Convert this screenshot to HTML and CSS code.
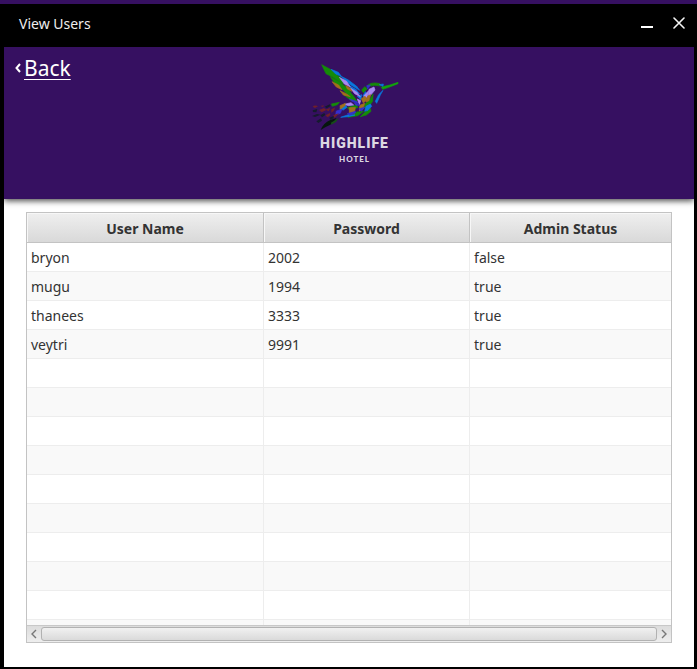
FILE: index.html
```html
<!DOCTYPE html>
<html lang="en">
<head>
<meta charset="utf-8">
<title>View Users</title>
<link rel="stylesheet" href="styles.css">
</head>
<body>
<div class="window">
  <header class="titlebar">
    <h1 class="title">View Users</h1>
    <div class="controls">
      <button class="control" type="button" aria-label="Minimize">
        <svg width="14" height="14" viewBox="0 0 14 14"><path d="M1 10h12" stroke="#fff" stroke-width="2"/></svg>
      </button>
      <button class="control" type="button" aria-label="Close">
        <svg width="14" height="14" viewBox="0 0 14 14"><path d="M2 1l10 10M12 1L2 11" stroke="#f4f4f4" stroke-width="1.6" stroke-linecap="round"/></svg>
      </button>
    </div>
  </header>
  <div class="banner">
    <div class="back">
      <svg width="6" height="10" viewBox="0 0 6 10" aria-hidden="true"><path d="M5 1L1.5 5 5 9" fill="none" stroke="#fff" stroke-width="2"/></svg>
      <a class="back-link" href="#">Back</a>
    </div>
    <div class="logo">
      <svg class="bird" width="110" height="70" viewBox="0 18 330 210" aria-hidden="true">
        <g fill="#148b08" stroke="#148b08">
          <path d="M65 29L91 43 126 72 130 86 96 65 78 56z"/>
          <path d="M91 65L118 80 148 104 156 123 132 105 108 91z"/>
          <path d="M117 91L140 104 159 121 171 139 148 125z"/>
          <path d="M131 119L153 126 169 139 151 135z"/>
          <path d="M203 90Q218 80 240 86L243 93 224 91 205 94z"/>
          <path d="M244 96L270 90 294 82 294 86 266 97 248 103z" fill="#11a50b" stroke="#11a50b"/>
          <path d="M185 105L194 95 202 101 190 113z"/>
          <path d="M194 148L210 133 219 117 218 139 207 154 193 159z"/>
          <path d="M142 158L169 149 174 157 151 167z"/>
          <path d="M144 187L170 171 191 169 173 182z"/>
          <path d="M194 172L211 160 213 169 199 180 181 185z"/>
          <path d="M94 147L118 142 112 149 97 154z"/>
        </g>
        <g fill="#0878dc" stroke="#0878dc">
          <path d="M93 43L115 52 124 64 107 57z"/>
          <path d="M120 62L145 75 170 94 179 106 151 89z"/>
          <path d="M146 91L167 103 179 117 164 110z"/>
          <path d="M226 139L236 119 249 106 241 120 230 145z"/>
          <path d="M119 162L135 148 141 157 130 165z"/>
          <path d="M198 154L211 147 215 154 204 166 194 169z"/>
          <path d="M122 187L145 179 165 180 145 185z"/>
          <path d="M238 89L250 87 249 94z"/>
          <path d="M189 122L196 110 201 116 195 131z"/>
          <path d="M172 124L185 119 183 134z"/>
        </g>
        <g fill="#a98af2" stroke="#a98af2">
          <path d="M118 67L140 79 151 96 133 87z"/>
          <path d="M151 99L171 112 181 125 164 116z"/>
          <path d="M207 103L222 96 225 105 214 118 204 128z"/>
          <path d="M193 121L206 107 202 125 190 139z"/>
          <path d="M133 148L153 143 161 150 145 152z"/>
          <path d="M172 132L182 137 178 149z"/>
        </g>
        <g fill="#a36f1c" stroke="#a36f1c">
          <path d="M96 80L116 90 126 104 109 96z"/>
          <path d="M120 107L140 117 151 125 130 120z"/>
          <path d="M137 91L149 98 156 109 142 102z"/>
          <path d="M184 131L195 124 203 133 190 144z"/>
          <path d="M203 123L212 119 207 137 198 141z"/>
          <path d="M120 152L136 145 135 152 121 163z"/>
          <path d="M148 158L166 157 164 170 148 174z"/>
          <path d="M179 151L194 145 189 162 178 168z"/>
        </g>
        <g fill="#3430cf" stroke="#3430cf">
          <path d="M163 143L180 151 168 151z"/>
          <path d="M142 176L166 169 166 174 149 181z"/>
          <path d="M177 161L194 157 184 169z"/>
          <path d="M200 92L211 90 203 102z"/>
          <path d="M109 168L126 163 121 175 107 180z"/>
          <path d="M148 132L169 139 176 146 156 139z"/>
        </g>
        <g fill="#702029">
          <path d="M38 155Q44 149 54 154L45 159z"/>
          <path d="M61 153L72 151 69 156z"/>
          <path d="M57 165L72 159 79 165 65 172z"/>
          <path d="M77 164L91 158 86 169z"/>
          <path d="M94 163L106 157 101 168 94 173z"/>
          <path d="M76 181L90 174 91 181 83 187z"/>
          <path d="M101 180L117 175 106 187 99 188z"/>
        </g>
        <g fill="#151b2d">
          <path d="M38 166L52 162 49 172 39 171z"/>
          <path d="M36 183L51 177 62 179 45 186z"/>
          <path d="M49 199L63 190 66 197 55 204z"/>
          <path d="M74 155L89 148 92 153 80 160z"/>
          <path d="M61 181L73 174 76 180 66 187z"/>
          <path d="M88 188L101 183 101 190 91 194z"/>
        </g>
        <path fill="#06170d" d="M62 225Q70 204 91 195L110 189Q103 201 91 209L77 216z"/>
        <path fill="#174d19" d="M93 203L117 188 108 201 94 209z"/>
      </svg>
      <span class="logo-name">HIGHLIFE</span>
      <span class="logo-kind">HOTEL</span>
    </div>
  </div>
  <main class="content">
    <div class="grid">
      <div class="viewport">
        <table class="users">
          <colgroup><col class="col-name"><col class="col-pass"><col></colgroup>
          <thead>
            <tr><th scope="col">User Name</th><th scope="col">Password</th><th scope="col">Admin Status</th></tr>
          </thead>
          <tbody>
            <tr><td>bryon</td><td>2002</td><td>false</td></tr>
            <tr><td>mugu</td><td>1994</td><td>true</td></tr>
            <tr><td>thanees</td><td>3333</td><td>true</td></tr>
            <tr><td>veytri</td><td>9991</td><td>true</td></tr>
            <tr><td></td><td></td><td></td></tr>
            <tr><td></td><td></td><td></td></tr>
            <tr><td></td><td></td><td></td></tr>
            <tr><td></td><td></td><td></td></tr>
            <tr><td></td><td></td><td></td></tr>
            <tr><td></td><td></td><td></td></tr>
            <tr><td></td><td></td><td></td></tr>
            <tr><td></td><td></td><td></td></tr>
            <tr><td></td><td></td><td></td></tr>
            <tr><td></td><td></td><td></td></tr>
          </tbody>
        </table>
      </div>
      <div class="scrollbar">
        <button class="arrow" type="button" aria-label="Scroll left">
          <svg width="6" height="10" viewBox="0 0 6 10"><path d="M5 1L1 5l4 4" fill="none" stroke="#777" stroke-width="1.4"/></svg>
        </button>
        <div class="thumb"></div>
        <button class="arrow" type="button" aria-label="Scroll right">
          <svg width="6" height="10" viewBox="0 0 6 10"><path d="M1 1l4 4-4 4" fill="none" stroke="#777" stroke-width="1.4"/></svg>
        </button>
      </div>
    </div>
  </main>
</div>
</body>
</html>
```
FILE: styles.css
```css
* {
  box-sizing: border-box;
}

body {
  margin: 0;
  background: #000;
  color: #333;
  font-family: "Noto Sans", "Open Sans", sans-serif;
  font-size: 14px;
}

button {
  display: flex;
  align-items: center;
  justify-content: center;
  padding: 0;
  border: 0;
  background: none;
}

.window {
  display: flex;
  flex-direction: column;
  height: 100vh;
  border-top: 4px solid #361061;
  padding: 0 3px 2px 4px;
}

.titlebar {
  display: flex;
  flex: none;
  align-items: center;
  justify-content: space-between;
  height: 43px;
  padding: 0 8px 4px 15px;
}

.title {
  margin: 0;
  color: #eee;
  font-size: 14px;
  font-weight: 400;
}

.controls {
  display: flex;
  gap: 18px;
}

.banner {
  position: relative;
  display: grid;
  grid-template-columns: 1fr auto 1fr;
  flex: none;
  height: 152px;
  padding: 5px 0 0 11px;
  background: #361061;
  box-shadow: 0 2px 6px rgba(0, 0, 0, 0.7);
  clip-path: inset(0 0 -10px 0);
}

.back {
  display: flex;
  align-items: center;
  align-self: start;
  gap: 3px;
  height: 32px;
}

.back-link {
  color: #fff;
  font-size: 21px;
  text-decoration: underline;
  text-decoration-thickness: 1px;
  text-underline-offset: 3px;
}

.logo {
  display: flex;
  flex-direction: column;
  align-items: center;
  padding-top: 9px;
  color: #ddd8e2;
  font-family: Roboto, sans-serif;
}

.bird {
  display: block;
}

.bird g[stroke] {
  stroke-width: 2px;
}

.logo-name {
  margin-top: 4px;
  font-size: 14px;
  font-weight: 900;
  letter-spacing: 1px;
  line-height: 16px;
}

.logo-kind {
  margin-top: 4px;
  font-family: Lato, sans-serif;
  font-size: 8px;
  font-weight: 900;
  letter-spacing: 1px;
  line-height: 8px;
}

.content {
  display: flex;
  flex: 1;
  min-height: 0;
  padding: 13px 22px 24px;
  background: #fff;
}

.grid {
  display: flex;
  flex: 1;
  flex-direction: column;
  min-width: 0;
  border: 1px solid #c3c3c3;
}

.viewport {
  flex: 1;
  min-height: 0;
  overflow: hidden;
}

.users {
  width: 100%;
  border-spacing: 0;
  table-layout: fixed;
}

.col-name {
  width: 36.8%;
}

.col-pass {
  width: 32%;
}

th,
td {
  padding: 2px 4px 0;
  line-height: 26px;
}

th {
  height: 30px;
  border-right: 1px solid #c3c3c3;
  border-bottom: 1px solid #c3c3c3;
  background: linear-gradient(#efefef, #d9d9d9);
  box-shadow: inset 1px 1px #f7f7f7;
  font-weight: 700;
}

td {
  height: 29px;
  border-right: 1px solid #ededed;
  border-bottom: 1px solid #ededed;
}

th:last-child,
td:last-child {
  border-right: 0;
}

tbody tr:nth-child(even) {
  background: #f9f9f9;
}

.scrollbar {
  display: flex;
  flex: none;
  height: 17px;
  border-top: 1px solid #c8c8c8;
  background: linear-gradient(#dcdcdc, #eee);
}

.arrow {
  flex: none;
  width: 14px;
}

.thumb {
  flex: 1;
  margin: 1px 0;
  border: 1px solid #b2b2b2;
  border-radius: 3px;
  background: linear-gradient(#f1f1f1, #dadada);
}
```
